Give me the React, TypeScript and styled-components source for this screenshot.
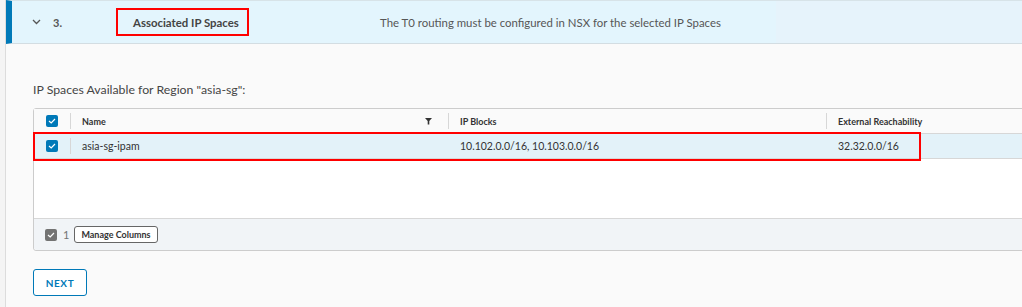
import styled, { createGlobalStyle } from "styled-components";

const GlobalStyle = createGlobalStyle`
  html, body {
    margin: 0;
    padding: 0;
    background: #ffffff;
  }
  body {
    font-family: "Lato", "Noto Sans", sans-serif;
    color: #333333;
    overflow: hidden;
  }
`;

const Page = styled.div`
  width: 1022px;
  height: 307px;
  overflow: hidden;
  background: #f4f4f4;
  padding-left: 5px;
  box-sizing: border-box;
`;

const Panel = styled.div`
  height: 100%;
  border-left: 1px solid #dcdcdc;
  background: #fafafa;
  display: flex;
  flex-direction: column;
`;

const StepHeader = styled.div`
  height: 42px;
  display: flex;
  align-items: center;
  background: linear-gradient(to right, #e3f5fd 0, #e3f5fd 764px, #e6f3fb 764px);
  border-top: 1px solid #d7e3e8;
  border-bottom: 1px solid #d3dde2;
  border-left: 6px solid #0079b8;
  padding-left: 20px;
  box-sizing: content-box;
`;

const Chevron = styled.span`
  width: 21px;
  display: flex;
  align-items: center;
  color: #565656;
`;

const StepNumber = styled.span`
  width: 63px;
  font-size: 11px;
  font-weight: 700;
  color: #565656;
`;

const StepTitle = styled.span`
  width: 133px;
  height: 28px;
  box-sizing: border-box;
  border: 2px solid #ff0000;
  display: flex;
  align-items: center;
  padding-left: 15px;
  font-size: 11.4px;
  font-weight: 700;
  color: #444444;
`;

const StepDescription = styled.span`
  margin-left: 131px;
  font-size: 11.4px;
  color: #565656;
`;

const Body = styled.div`
  padding: 38px 0 0 27px;
  display: flex;
  flex-direction: column;
  align-items: flex-start;
`;

const SectionLabel = styled.div`
  font-size: 12.3px;
  line-height: 16px;
  color: #454545;
  margin-bottom: 10px;
`;

const Grid = styled.div`
  width: 1010px;
  border: 1px solid #cccccc;
  border-radius: 3px;
  background: #ffffff;
  box-sizing: border-box;
`;

const Row = styled.div<{ $header?: boolean; $selected?: boolean }>`
  position: relative;
  display: grid;
  grid-template-columns: 36px 378px 378px 1fr;
  height: 24px;
  align-items: center;
  background: ${(p) => (p.$selected ? "#e3f2f9" : p.$header ? "#fafafa" : "#ffffff")};
  border-bottom: 1px solid #d7d7d7;
  font-size: ${(p) => (p.$header ? "9px" : "10.5px")};
  font-weight: ${(p) => (p.$header ? 700 : 400)};
  color: #333333;
`;

const Cell = styled.div<{ $divider?: boolean }>`
  height: 100%;
  display: flex;
  align-items: center;
  justify-content: space-between;
  padding: 0 16px 0 12px;
  box-sizing: border-box;
  position: relative;
  &::before {
    content: "";
    display: ${(p) => (p.$divider ? "block" : "none")};
    position: absolute;
    left: 0;
    top: 4px;
    bottom: 4px;
    width: 1px;
    background: #d7d7d7;
  }
`;

const CheckCell = styled.div`
  display: flex;
  justify-content: center;
  align-items: center;
  height: 100%;
`;

const CheckBox = styled.span<{ $muted?: boolean }>`
  width: 12px;
  height: 12px;
  border-radius: 2px;
  background: ${(p) => (p.$muted ? "#737373" : "#0079b8")};
  display: inline-flex;
  align-items: center;
  justify-content: center;
`;

const EmptyArea = styled.div`
  height: 59px;
`;

const Footer = styled.div`
  height: 31px;
  display: flex;
  align-items: center;
  gap: 4px;
  padding-left: 11px;
  background: #f1f4f7;
  border-top: 1px solid #d7d7d7;
  border-radius: 0 0 3px 3px;
  font-size: 11px;
  color: #737373;
`;

const Count = styled.span`
  margin: 0 1px 0 2px;
`;

const ManageButton = styled.button`
  height: 17px;
  padding: 0 6px;
  border: 1px solid #666666;
  border-radius: 3px;
  background: #ffffff;
  font-family: "Lato", "Noto Sans", sans-serif;
  font-size: 9px;
  font-weight: 700;
  color: #333333;
  cursor: pointer;
`;

const RedOutline = styled.div`
  position: absolute;
  left: -1px;
  top: -2px;
  width: 888px;
  height: 29px;
  border: 2px solid #ff0000;
  box-sizing: border-box;
  pointer-events: none;
`;

const NextButton = styled.button`
  margin-top: 18px;
  width: 54px;
  height: 27px;
  border: 1px solid #0079b8;
  border-radius: 3px;
  background: #ffffff;
  color: #0079b8;
  font-family: "Lato", "Noto Sans", sans-serif;
  font-size: 10px;
  font-weight: 700;
  letter-spacing: 0.6px;
  cursor: pointer;
`;

const Check = ({ muted }: { muted?: boolean }) => (
  <CheckBox $muted={muted}>
    <svg width="8" height="6" viewBox="0 0 8 6">
      <path d="M1 3 L3.2 5 L7 1" fill="none" stroke="#ffffff" strokeWidth="1.2" />
    </svg>
  </CheckBox>
);

const FilterIcon = () => (
  <svg width="7" height="7" viewBox="0 0 7 7">
    <path d="M0 0 H7 L4.3 3 V6.5 H2.7 V3 Z" fill="#333333" />
  </svg>
);

export default function App() {
  return (
    <>
      <GlobalStyle />
      <Page>
        <Panel>
          <StepHeader>
            <Chevron>
              <svg width="9" height="6" viewBox="0 0 9 6">
                <path d="M1 1 L4.5 4.5 L8 1" fill="none" stroke="#565656" strokeWidth="1.3" />
              </svg>
            </Chevron>
            <StepNumber>3.</StepNumber>
            <StepTitle>Associated IP Spaces</StepTitle>
            <StepDescription>
              The T0 routing must be configured in NSX for the selected IP Spaces
            </StepDescription>
          </StepHeader>
          <Body>
            <SectionLabel>IP Spaces Available for Region "asia-sg":</SectionLabel>
            <Grid>
              <Row $header>
                <CheckCell>
                  <Check />
                </CheckCell>
                <Cell $divider>
                  <span>Name</span>
                  <FilterIcon />
                </Cell>
                <Cell $divider>IP Blocks</Cell>
                <Cell $divider>External Reachability</Cell>
              </Row>
              <Row $selected>
                <CheckCell>
                  <Check />
                </CheckCell>
                <Cell $divider>asia-sg-ipam</Cell>
                <Cell>10.102.0.0/16, 10.103.0.0/16</Cell>
                <Cell>32.32.0.0/16</Cell>
                <RedOutline />
              </Row>
              <EmptyArea />
              <Footer>
                <Check muted />
                <Count>1</Count>
                <ManageButton>Manage Columns</ManageButton>
              </Footer>
            </Grid>
            <NextButton>NEXT</NextButton>
          </Body>
        </Panel>
      </Page>
    </>
  );
}
